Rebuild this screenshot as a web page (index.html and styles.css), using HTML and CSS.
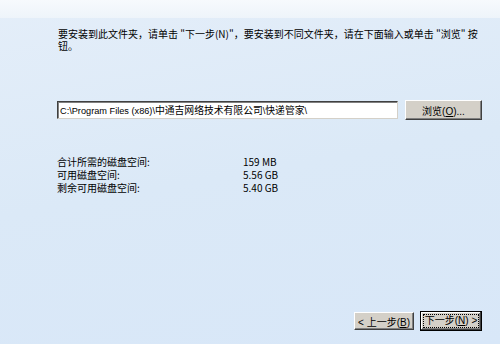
FILE: index.html
```html
<!DOCTYPE html>
<html lang="zh-CN">
<head>
    <meta charset="UTF-8">
    <title>选择安装位置</title>
    <link rel="stylesheet" href="styles.css">
</head>
<body>
    <div class="page">
        <div class="top-strip"></div>
        <div class="content">
            <p class="intro">要安装到此文件夹，请单击 "下一步(N)"，要安装到不同文件夹，请在下面输入或单击 "浏览" 按钮。</p>
            <div class="path-row">
                <div class="path-box">C:\Program Files (x86)\<span class="cjk">中通吉网络技术有限公司</span>\<span class="cjk">快递管家</span>\</div>
                <button class="btn browse">浏览(<u>O</u>)...</button>
            </div>
            <div class="space">
                <span>合计所需的磁盘空间:</span><span>159 MB</span>
                <span>可用磁盘空间:</span><span>5.56 GB</span>
                <span>剩余可用磁盘空间:</span><span>5.40 GB</span>
            </div>
        </div>
        <div class="nav">
            <button class="btn">&lt; 上一步(<u>B</u>)</button>
            <button class="btn default"><span class="focus">下一步(<u>N</u>) &gt;</span></button>
        </div>
    </div>
</body>
</html>
```

FILE: styles.css
```css
body {
    margin: 0;
    font-family: "DejaVu Sans", "Noto Sans CJK SC", sans-serif;
    font-size: 10px;
    color: #000;
}
.page {
    width: 500px;
    height: 344px;
    display: flex;
    flex-direction: column;
    background: linear-gradient(170deg, #e4eef9 0%, #dbe9f7 50%, #d8e7f8 100%);
}
.top-strip {
    height: 18px;
    background: linear-gradient(#f7fafd, #eef4fa);
}
.content {
    flex: 1;
    padding: 0 18px 0 58px;
}
.intro {
    margin: 10px 0 0;
    width: 420px;
    line-height: 12px;
    font-family: "Noto Sans CJK SC", sans-serif;
    font-size: 10px;
}
.path-row {
    display: flex;
    align-items: center;
    gap: 7px;
    margin-top: 48px;
    margin-left: -1px;
}
.path-box {
    width: 337px;
    height: 16px;
    line-height: 16px;
    padding-left: 2px;
    background: #fff;
    border: 1px solid;
    border-color: #404040 #d4d0c8 #d4d0c8 #404040;
    box-shadow: inset 1px 1px 0 #808080;
    font-family: "Liberation Sans", "Noto Sans CJK SC", sans-serif;
    font-size: 9.2px;
    white-space: nowrap;
    overflow: hidden;
}
.path-box .cjk {
    font-family: "Noto Sans CJK SC", sans-serif;
    font-size: 9.8px;
}
.btn {
    font-family: "Liberation Sans", "Noto Sans CJK SC", sans-serif;
    font-size: 10px;
    background: #d4d0c8;
    border: 1px solid;
    border-color: #fff #404040 #404040 #fff;
    box-shadow: inset -1px -1px 0 #808080;
    padding: 0;
    color: #000;
}
.browse {
    width: 77px;
    height: 20px;
}
.space {
    display: grid;
    grid-template-columns: 186px auto;
    grid-auto-rows: 13px;
    margin-top: 35px;
    margin-left: -1px;
    line-height: 13px;
    font-family: "Noto Sans CJK SC", sans-serif;
    font-size: 10px;
}
.nav {
    display: flex;
    justify-content: flex-end;
    align-items: center;
    gap: 6px;
    padding: 0 18px 13px 0;
}
.nav .btn {
    width: 60px;
    height: 18px;
}
.nav .default {
    width: 62px;
    height: 20px;
    border: 1px solid #000;
    box-shadow: inset -1px -1px 0 #404040, inset 1px 1px 0 #fff, inset -2px -2px 0 #808080;
}
.focus {
    display: inline-block;
    border: 1px dotted #000;
    padding: 0 1px;
    line-height: 12px;
}
```
